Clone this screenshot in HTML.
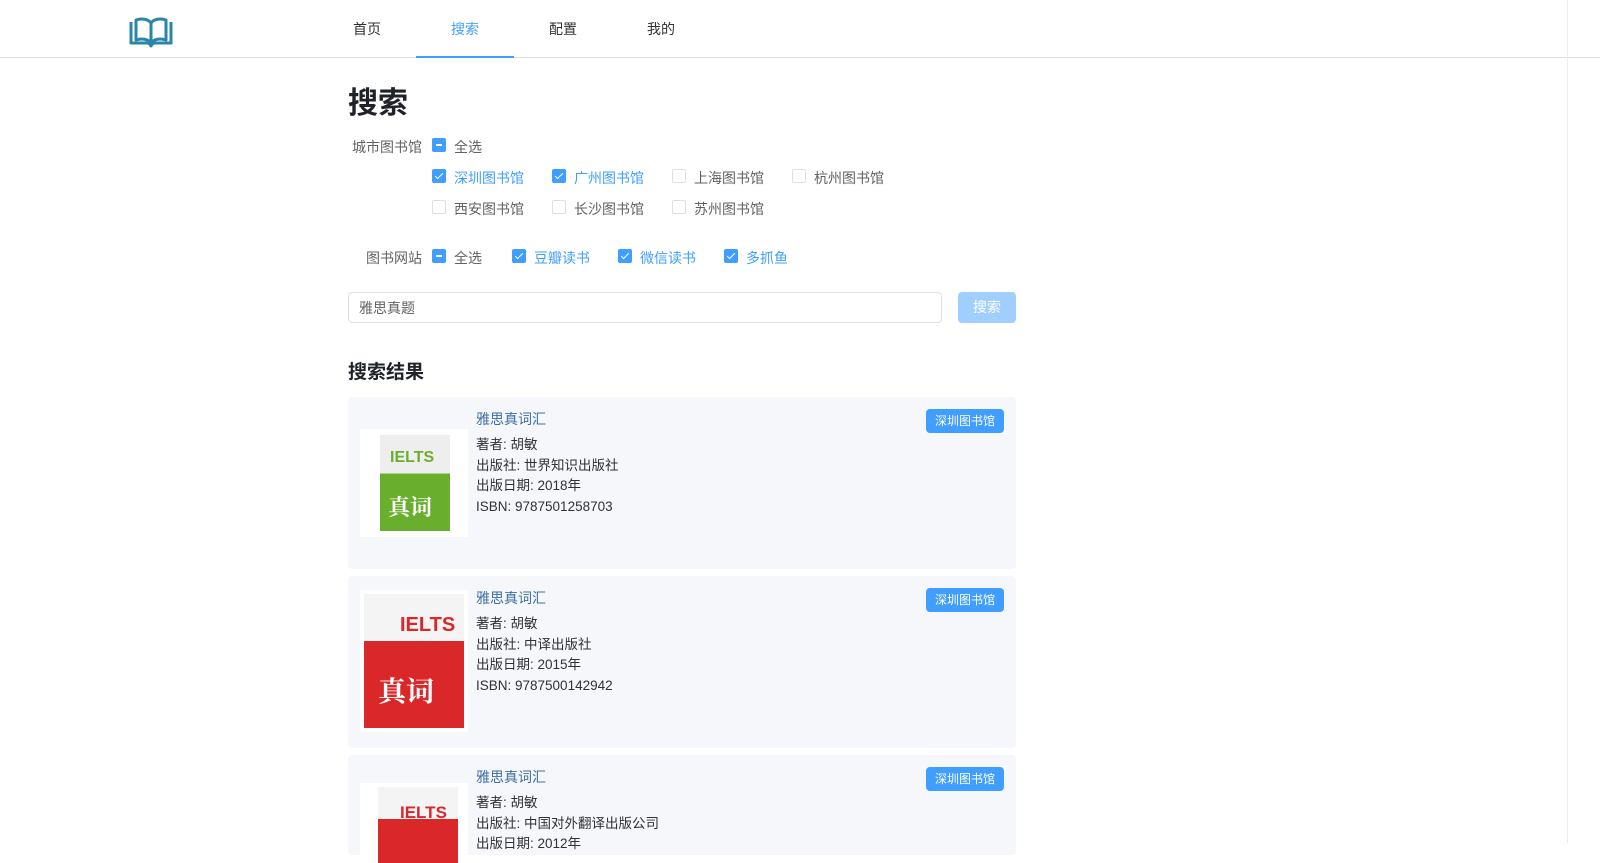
<!DOCTYPE html>
<html><head><meta charset="utf-8"><style>
*{box-sizing:border-box;margin:0;padding:0}
body{width:1600px;height:843px;overflow:hidden;background:#fff;font-family:"Liberation Sans","Noto Sans CJK SC",sans-serif;color:#333;position:relative}
.hdr{position:absolute;left:0;top:0;width:1600px;height:58px;border-bottom:1px solid #dcdfe6}
.nav{position:absolute;top:0;height:58px;width:98px;text-align:center;line-height:58px;font-size:14px;color:#303133}
.nav.a{color:#409eff;border-bottom:2px solid #409eff}
.t{position:absolute;white-space:nowrap;font-size:14px;color:#606266}
.cb{position:absolute;width:14px;height:14px;border:1px solid #dcdfe6;border-radius:2px;background:#fff}
.cb.on{background:#409eff;border-color:#409eff}
.cb.on:after{content:"";position:absolute;left:4px;top:1px;width:3px;height:7px;border:solid #fff;border-width:0 1px 1px 0;transform:rotate(45deg)}
.cb.ind{background:#409eff;border-color:#409eff}
.cb.ind:after{content:"";position:absolute;left:3px;top:5px;width:6px;height:2px;background:#fff}
.blue{color:#409eff}
.card{position:absolute;left:348px;width:668px;height:172px;background:#f5f7fa;border-radius:4px}
.tag{position:absolute;right:12px;top:12px;width:78px;height:24px;background:#409eff;color:#fff;border-radius:4px;font-size:12px;text-align:center;line-height:24px}
.ti{position:absolute;left:128px;top:12px;font-size:14px;color:#3a6ea5}
.info{position:absolute;left:128px;top:38px;font-size:13.5px;color:#303133;line-height:20.5px}
.cov{position:absolute;left:12px;width:108px;background:#fff;overflow:hidden}
</style></head><body>
<div class="hdr"></div>
<div style="position:absolute;left:1567px;top:0;width:1px;height:843px;background:#eee"></div>
<svg style="position:absolute;left:128px;top:16px" width="46" height="32" viewBox="0 0 46 32"><path d="M3 6v21h16c2 0 3 1 4 3 1-2 2-3 4-3h16V6" fill="none" stroke="#2a86a8" stroke-width="3" stroke-linejoin="round"/><path d="M8 24V4c6-2 12-1 15 3 3-4 9-5 15-3v20c-6-2-12-1-15 3-3-4-9-5-15-3zM23 7v20" fill="none" stroke="#2a86a8" stroke-width="3" stroke-linejoin="round"/></svg>
<div class="nav" style="left:318px">首页</div>
<div class="nav a" style="left:416px">搜索</div>
<div class="nav" style="left:514px">配置</div>
<div class="nav" style="left:612px">我的</div>
<div class="t" style="left:348px;top:78px;font-size:30px;font-weight:bold;color:#1f2329">搜索</div>
<div class="t" style="left:352px;top:137px">城市图书馆</div>
<div class="cb ind" style="left:432px;top:138px"></div><div class="t" style="left:454px;top:137px">全选</div>
<div class="cb on" style="left:432px;top:169px"></div><div class="t blue" style="left:454px;top:168px">深圳图书馆</div>
<div class="cb on" style="left:552px;top:169px"></div><div class="t blue" style="left:574px;top:168px">广州图书馆</div>
<div class="cb" style="left:672px;top:169px"></div><div class="t" style="left:694px;top:168px">上海图书馆</div>
<div class="cb" style="left:792px;top:169px"></div><div class="t" style="left:814px;top:168px">杭州图书馆</div>
<div class="cb" style="left:432px;top:200px"></div><div class="t" style="left:454px;top:199px">西安图书馆</div>
<div class="cb" style="left:552px;top:200px"></div><div class="t" style="left:574px;top:199px">长沙图书馆</div>
<div class="cb" style="left:672px;top:200px"></div><div class="t" style="left:694px;top:199px">苏州图书馆</div>
<div class="t" style="left:366px;top:248px">图书网站</div>
<div class="cb ind" style="left:432px;top:249px"></div><div class="t" style="left:454px;top:248px">全选</div>
<div class="cb on" style="left:512px;top:249px"></div><div class="t blue" style="left:534px;top:248px">豆瓣读书</div>
<div class="cb on" style="left:618px;top:249px"></div><div class="t blue" style="left:640px;top:248px">微信读书</div>
<div class="cb on" style="left:724px;top:249px"></div><div class="t blue" style="left:746px;top:248px">多抓鱼</div>
<div style="position:absolute;left:348px;top:292px;width:594px;height:31px;border:1px solid #dcdfe6;border-radius:4px"></div>
<div class="t" style="left:359px;top:298px;color:#606266">雅思真题</div>
<div style="position:absolute;left:958px;top:292px;width:58px;height:31px;background:#a0cfff;border-radius:4px;color:#fff;font-size:14px;text-align:center;line-height:31px">搜索</div>
<div class="t" style="left:348px;top:357px;font-size:19px;font-weight:bold;color:#1f2329">搜索结果</div>

<div class="card" style="top:397px">
<div class="cov" style="top:32px;height:108px"><div style="position:absolute;left:20px;top:6px;width:70px;height:96px;background:linear-gradient(#eee 0 40%,#6aae2e 40%);"></div><div style="position:absolute;left:30px;top:20px;font:bold 16px 'Liberation Sans';color:#6aae2e">IELTS</div><div style="position:absolute;left:28px;top:62px;font:bold 22px 'Noto Serif CJK SC';color:#fff">真词</div></div>
<div class="ti">雅思真词汇</div><div class="tag">深圳图书馆</div>
<div class="info">著者: 胡敏<br>出版社: 世界知识出版社<br>出版日期: 2018年<br>ISBN: 9787501258703</div>
</div>
<div class="card" style="top:576px">
<div class="cov" style="top:14px;height:142px"><div style="position:absolute;left:4px;top:4px;width:100px;height:134px;background:linear-gradient(#f4f4f4 0 35%,#d9272a 35%);"></div><div style="position:absolute;left:40px;top:24px;font:bold 20px 'Liberation Sans';color:#d9272a">IELTS</div><div style="position:absolute;left:18px;top:80px;font:bold 28px 'Noto Serif CJK SC';color:#fff">真词</div></div>
<div class="ti">雅思真词汇</div><div class="tag">深圳图书馆</div>
<div class="info">著者: 胡敏<br>出版社: 中译出版社<br>出版日期: 2015年<br>ISBN: 9787500142942</div>
</div>
<div class="card" style="top:755px;height:100px">
<div class="cov" style="top:28px;height:80px"><div style="position:absolute;left:18px;top:4px;width:80px;height:80px;background:linear-gradient(#f4f4f4 0 40%,#d9272a 40%);"></div><div style="position:absolute;left:40px;top:20px;font:bold 17px 'Liberation Sans';color:#d9272a">IELTS</div></div>
<div class="ti">雅思真词汇</div><div class="tag">深圳图书馆</div>
<div class="info">著者: 胡敏<br>出版社: 中国对外翻译出版公司<br>出版日期: 2012年</div>
</div>
</body></html>
